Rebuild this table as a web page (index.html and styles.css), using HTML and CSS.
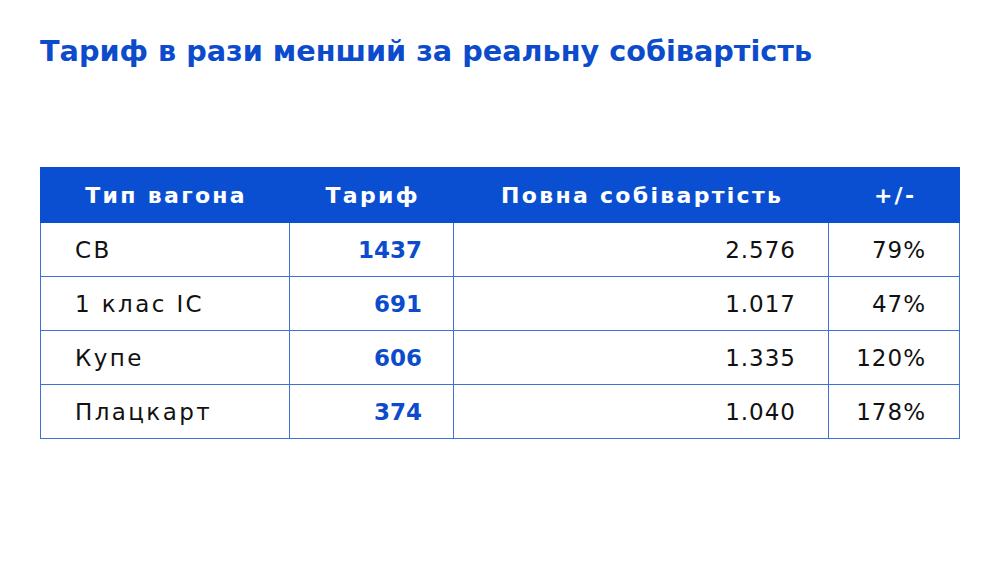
FILE: index.html
```html
<!DOCTYPE html>
<html lang="uk">
<head>
<meta charset="utf-8">
<link rel="stylesheet" href="styles.css">
</head>
<body>
<div class="page">
  <h1 class="title">Тариф в рази менший за реальну собівартість</h1>
  <table class="tbl">
    <colgroup>
      <col class="c1">
      <col class="c2">
      <col class="c3">
      <col class="c4">
    </colgroup>
    <thead>
      <tr>
        <th>Тип вагона</th>
        <th>Тариф</th>
        <th>Повна собівартість</th>
        <th>+/-</th>
      </tr>
    </thead>
    <tbody>
      <tr><td class="name">СВ</td><td class="tariff">1437</td><td class="num">2.576</td><td class="num pct">79%</td></tr>
      <tr><td class="name">1 клас IC</td><td class="tariff">691</td><td class="num">1.017</td><td class="num pct">47%</td></tr>
      <tr><td class="name">Купе</td><td class="tariff">606</td><td class="num">1.335</td><td class="num pct">120%</td></tr>
      <tr><td class="name">Плацкарт</td><td class="tariff">374</td><td class="num">1.040</td><td class="num pct">178%</td></tr>
    </tbody>
  </table>
</div>
</body>
</html>
```

FILE: styles.css
```css
html, body {
  margin: 0;
  padding: 0;
  background: #ffffff;
}
.page {
  width: 1000px;
  height: 562px;
  padding: 32px 40px 0 40px;
  box-sizing: border-box;
  font-family: "DejaVu Sans", "Noto Sans", sans-serif;
}
.title {
  margin: 0;
  font-size: 28.7px;
  line-height: 38px;
  font-weight: 700;
  color: #0b4bcc;
  letter-spacing: 0;
}
.tbl {
  margin-top: 97px;
  width: 919px;
  border-collapse: collapse;
  table-layout: fixed;
}
.c1 { width: 249px; }
.c2 { width: 164px; }
.c3 { width: 375px; }
.c4 { width: 131px; }
.tbl th {
  background: #0a4fd1;
  color: #ffffff;
  font-size: 22px;
  font-weight: 700;
  letter-spacing: 2.3px;
  text-indent: 2.3px;
  height: 54px;
  padding: 0;
  text-align: center;
  border: 1.5px solid #0a4fd1;
}
.tbl td {
  height: 53px;
  padding: 0 32px;
  font-size: 23px;
  color: #111111;
  border: 1.5px solid #3d6fd6;
}
.tbl td.name { text-align: left; padding-left: 34px; letter-spacing: 2.4px; }
.tbl td.tariff { text-align: right; color: #0b4bcc; font-weight: 700; padding-right: 31px; }
.tbl td.num { text-align: right; letter-spacing: 1px; }
.tbl td.pct { padding: 0 33px 0 0; }
```
